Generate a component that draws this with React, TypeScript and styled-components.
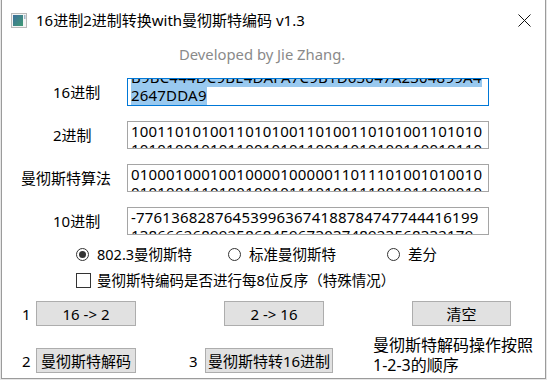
import React from "react";
import styled, { createGlobalStyle } from "styled-components";

const GlobalStyle = createGlobalStyle`
  html, body {
    margin: 0;
    padding: 0;
    background: #e6e6e6;
  }
  body {
    font-family: "Noto Sans", "Noto Sans CJK SC", sans-serif;
    color: #000;
  }
`;

const Frame = styled.div`
  margin-left: 1px;
  width: 545px;
  height: 379px;
  box-sizing: border-box;
  border: 1px solid #9b9b9b;
  border-top: none;
  background: #ffffff;
  display: flex;
  flex-direction: column;
  overflow: hidden;
`;

const TitleBar = styled.div`
  height: 40px;
  flex-shrink: 0;
  display: flex;
  align-items: center;
  padding-left: 9px;
`;

const TitleText = styled.div`
  flex: 1;
  margin-left: 8px;
  font-size: 15px;
  line-height: 20px;
  white-space: nowrap;
`;

const CloseBox = styled.div`
  width: 42px;
  height: 40px;
  display: flex;
  align-items: center;
  justify-content: center;
`;

const Credit = styled.div`
  margin-top: 4px;
  padding-left: 177px;
  font-size: 14.8px;
  line-height: 20px;
  color: #8a8a8a;
  white-space: nowrap;
`;

const Fields = styled.div`
  margin-top: 14px;
  display: grid;
  grid-template-columns: 125px 362px;
  row-gap: 15px;
`;

const FieldLabel = styled.div<{ $indent: number }>`
  display: flex;
  align-items: center;
  padding-left: ${(p) => p.$indent}px;
  font-size: 15px;
  line-height: 20px;
  white-space: nowrap;
`;

const TextBox = styled.div<{ $focused?: boolean }>`
  height: 28px;
  box-sizing: border-box;
  border: 1px solid ${(p) => (p.$focused ? "#0078d7" : "#a5a5a5")};
  padding: 0 3px;
  overflow: hidden;
  font-size: 15px;
  line-height: 18px;
  letter-spacing: 0.2px;
`;

const TextScroll = styled.div<{ $scroll: number }>`
  transform: translateY(-${(p) => p.$scroll}px);
`;

const TextLine = styled.div`
  white-space: nowrap;
`;

const Selected = styled.span`
  background: #99c9ef;
`;

const OptionRow = styled.div<{ $top: number }>`
  margin-top: ${(p) => p.$top}px;
  height: 20px;
  display: flex;
  align-items: center;
  padding-left: 74px;
`;

const RadioItem = styled.div<{ $w: number }>`
  width: ${(p) => p.$w}px;
  display: flex;
  align-items: center;
  gap: 8px;
  font-size: 14.5px;
  line-height: 20px;
  white-space: nowrap;
`;

const RadioDot = styled.span<{ $on?: boolean }>`
  width: 13px;
  height: 13px;
  box-sizing: border-box;
  border-radius: 50%;
  border: 1px solid #333;
  display: flex;
  align-items: center;
  justify-content: center;
  flex-shrink: 0;
  &::after {
    content: "";
    width: 7px;
    height: 7px;
    border-radius: 50%;
    background: ${(p) => (p.$on ? "#333" : "transparent")};
  }
`;

const CheckItem = styled.div`
  display: flex;
  align-items: center;
  gap: 6px;
  font-size: 14.5px;
  line-height: 20px;
  white-space: nowrap;
`;

const CheckBox = styled.span`
  width: 15px;
  height: 15px;
  box-sizing: border-box;
  border: 1px solid #333;
  background: #fff;
  flex-shrink: 0;
`;

const ButtonRow = styled.div<{ $top: number }>`
  margin-top: ${(p) => p.$top}px;
  display: flex;
  align-items: flex-end;
  padding-left: 20px;
  height: 25px;
`;

const Num = styled.div<{ $w: number; $ml?: number }>`
  width: ${(p) => p.$w}px;
  margin-left: ${(p) => p.$ml ?? 0}px;
  align-self: center;
  font-size: 15px;
  line-height: 20px;
`;

const Btn = styled.button<{ $w: number; $ml?: number }>`
  width: ${(p) => p.$w}px;
  margin-left: ${(p) => p.$ml ?? 0}px;
  height: 25px;
  box-sizing: border-box;
  padding: 0;
  border: 1px solid #adadad;
  background: #e1e1e1;
  color: #000;
  font-family: "Noto Sans", "Noto Sans CJK SC", sans-serif;
  font-size: 15px;
  line-height: 20px;
  white-space: nowrap;
`;

const Note = styled.div`
  margin-left: 40px;
  margin-bottom: -2px;
  font-size: 16px;
  line-height: 20px;
  white-space: nowrap;
`;

function AppIcon() {
  return (
    <svg width="17" height="15" viewBox="0 0 17 15">
      <defs>
        <linearGradient id="ig" x1="0" y1="0" x2="1" y2="1">
          <stop offset="0" stopColor="#3d6f9c" />
          <stop offset="1" stopColor="#3f9a73" />
        </linearGradient>
      </defs>
      <rect x="0.5" y="0.5" width="15" height="14" fill="#f4f4f4" stroke="#b9b9b9" />
      <rect x="2" y="2" width="10" height="11" fill="url(#ig)" />
      <rect x="13" y="2" width="1.5" height="4" fill="#9fb8c8" />
    </svg>
  );
}

function CloseIcon() {
  return (
    <svg width="13" height="13" viewBox="0 0 13 13">
      <path d="M0.5 0.5 L12.5 12.5 M12.5 0.5 L0.5 12.5" stroke="#111" strokeWidth="1" />
    </svg>
  );
}

type Field = {
  label: string;
  indent: number;
  lines: string[];
  scroll: number;
  focused?: boolean;
  selected?: boolean;
};

const fields: Field[] = [
  {
    label: "16进制",
    indent: 51,
    lines: ["B9BC444DC9BE4DAFA7C9B1D63047A2304899A4", "2647DDA9"],
    scroll: 11,
    focused: true,
    selected: true,
  },
  {
    label: "2进制",
    indent: 51,
    lines: [
      "1001101010011010100110100110101001101010",
      "1010100101011001010110011010100110010110",
    ],
    scroll: 0,
  },
  {
    label: "曼彻斯特算法",
    indent: 19,
    lines: [
      "0100010001001000010000011011101001010010",
      "0101001110100100101110101111001011000010",
    ],
    scroll: 0,
  },
  {
    label: "10进制",
    indent: 51,
    lines: [
      "-776136828764539963674188784747744416199",
      "138666268992586845967303748923568332179",
    ],
    scroll: 0,
  },
];

export default function App() {
  return (
    <>
      <GlobalStyle />
      <Frame>
        <TitleBar>
          <AppIcon />
          <TitleText>16进制2进制转换with曼彻斯特编码 v1.3</TitleText>
          <CloseBox>
            <CloseIcon />
          </CloseBox>
        </TitleBar>
        <Credit>Developed by Jie Zhang.</Credit>
        <Fields>
          {fields.map((f) => (
            <React.Fragment key={f.label}>
              <FieldLabel $indent={f.indent}>{f.label}</FieldLabel>
              <TextBox $focused={f.focused}>
                <TextScroll $scroll={f.scroll}>
                  {f.lines.map((line) => (
                    <TextLine key={line}>
                      {f.selected ? <Selected>{line}</Selected> : line}
                    </TextLine>
                  ))}
                </TextScroll>
              </TextBox>
            </React.Fragment>
          ))}
        </Fields>
        <OptionRow $top={9}>
          <RadioItem $w={152}>
            <RadioDot $on />
            802.3曼彻斯特
          </RadioItem>
          <RadioItem $w={159}>
            <RadioDot />
            标准曼彻斯特
          </RadioItem>
          <RadioItem $w={80}>
            <RadioDot />
            差分
          </RadioItem>
        </OptionRow>
        <OptionRow $top={6}>
          <CheckItem>
            <CheckBox />
            曼彻斯特编码是否进行每8位反序（特殊情况）
          </CheckItem>
        </OptionRow>
        <ButtonRow $top={11}>
          <Num $w={14}>1</Num>
          <Btn $w={100}>16 -&gt; 2</Btn>
          <Btn $w={100} $ml={88}>2 -&gt; 16</Btn>
          <Btn $w={99} $ml={88}>清空</Btn>
        </ButtonRow>
        <ButtonRow $top={22}>
          <Num $w={14}>2</Num>
          <Btn $w={100}>曼彻斯特解码</Btn>
          <Num $w={16} $ml={53}>3</Num>
          <Btn $w={128}>曼彻斯特转16进制</Btn>
          <Note>
            曼彻斯特解码操作按照
            <br />
            1-2-3的顺序
          </Note>
        </ButtonRow>
      </Frame>
    </>
  );
}
